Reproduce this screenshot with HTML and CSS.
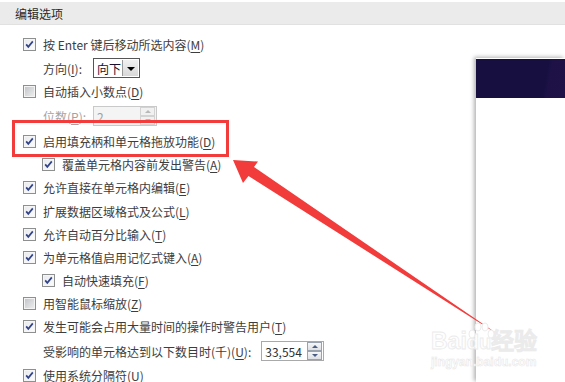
FILE: index.html
```html
<!DOCTYPE html>
<html lang="zh-CN">
<head>
<meta charset="utf-8">
<title>编辑选项</title>
<link rel="stylesheet" href="styles.css">
</head>
<body>
<svg class="defs" width="0" height="0" aria-hidden="true">
  <defs>
    <linearGradient id="gOn" x1="0" y1="0" x2="1" y2="1">
      <stop offset="0" stop-color="#e9ebee"/>
      <stop offset="1" stop-color="#fbfbfb"/>
    </linearGradient>
    <linearGradient id="gOff" x1="0" y1="0" x2="1" y2="1">
      <stop offset="0" stop-color="#c3c6cb"/>
      <stop offset="1" stop-color="#ececec"/>
    </linearGradient>
    <symbol id="cb-on" viewBox="0 0 13 13">
      <rect x="0.5" y="0.5" width="12" height="12" fill="#f6f6f6" stroke="#8e8f8f"/>
      <rect x="2" y="2" width="9" height="9" fill="url(#gOn)"/>
      <path d="M3.2 6.4 L5.3 8.9 L9.8 3.4" fill="none" stroke="#31438a" stroke-width="1.7"/>
    </symbol>
    <symbol id="cb-off" viewBox="0 0 13 13">
      <rect x="0.5" y="0.5" width="12" height="12" fill="#f4f4f4" stroke="#8e8f8f"/>
      <rect x="2" y="2" width="9" height="9" fill="url(#gOff)"/>
    </symbol>
  </defs>
</svg>

<div class="page">
  <div class="section-head">编辑选项</div>
  <div class="main">
    <div class="options">
      <div class="row"><svg class="cb"><use href="#cb-on"/></svg><span>按 Enter 键后移动所选内容(<u>M</u>)</span></div>
      <div class="row tall field">
        <span class="fixed">方向(<u>I</u>):</span>
        <div class="select"><span class="select-val">向下</span><span class="select-btn"><i class="tri-down"></i></span></div>
      </div>
      <div class="row"><svg class="cb"><use href="#cb-off"/></svg><span>自动插入小数点(<u>D</u>)</span></div>
      <div class="row ctl field">
        <span class="fixed disabled">位数(<u>P</u>):</span>
        <div class="spin spin-off"><span class="spin-val">2</span><span class="spin-btns"><span class="sb"><i class="tri-up"></i></span><span class="sb"><i class="tri-dn"></i></span></span></div>
      </div>
      <div class="row tall"><svg class="cb"><use href="#cb-on"/></svg><span>启用填充柄和单元格拖放功能(<u>D</u>)</span></div>
      <div class="row sub"><svg class="cb"><use href="#cb-on"/></svg><span>覆盖单元格内容前发出警告(<u>A</u>)</span></div>
      <div class="row"><svg class="cb"><use href="#cb-on"/></svg><span>允许直接在单元格内编辑(<u>E</u>)</span></div>
      <div class="row tall"><svg class="cb"><use href="#cb-on"/></svg><span>扩展数据区域格式及公式(<u>L</u>)</span></div>
      <div class="row"><svg class="cb"><use href="#cb-on"/></svg><span>允许自动百分比输入(<u>T</u>)</span></div>
      <div class="row"><svg class="cb"><use href="#cb-on"/></svg><span>为单元格值启用记忆式键入(<u>A</u>)</span></div>
      <div class="row sub"><svg class="cb"><use href="#cb-on"/></svg><span>自动快速填充(<u>F</u>)</span></div>
      <div class="row"><svg class="cb"><use href="#cb-off"/></svg><span>用智能鼠标缩放(<u>Z</u>)</span></div>
      <div class="row"><svg class="cb"><use href="#cb-on"/></svg><span>发生可能会占用大量时间的操作时警告用户(<u>T</u>)</span></div>
      <div class="row ctl field">
        <span class="field-lbl">受影响的单元格达到以下数目时(千)(<u>U</u>):</span>
        <div class="spin spin-on"><span class="spin-val">33,554</span><span class="spin-btns"><span class="sb"><i class="tri-up"></i></span><span class="sb"><i class="tri-dn"></i></span></span></div>
      </div>
      <div class="row last"><svg class="cb"><use href="#cb-on"/></svg><span>使用系统分隔符(<u>U</u>)</span></div>
    </div>
    <div class="panel"><div class="panel-head"></div></div>
  </div>

  <svg class="annot" viewBox="0 0 565 382" width="565" height="382" aria-hidden="true">
    <rect x="13.5" y="121.5" width="214" height="34" fill="none" stroke="#f23b3b" stroke-width="3"/>
    <polygon points="233,160 258,161.5 254,167 502,337 248.5,176 243,183" fill="#f23b3b"/>
  </svg>

  <div class="wm">
    <svg class="wm-paw" viewBox="0 0 30 20" width="30" height="20" aria-hidden="true">
      <ellipse cx="6" cy="12" rx="3" ry="4" fill="#fff" stroke="#ececec"/>
      <ellipse cx="12" cy="5" rx="3" ry="4" fill="#fff" stroke="#ececec"/>
      <ellipse cx="19" cy="5" rx="3" ry="4" fill="#fff" stroke="#ececec"/>
      <ellipse cx="25" cy="12" rx="3" ry="4" fill="#fff" stroke="#ececec"/>
    </svg>
    <div class="wm-logo">Bai<span class="wm-du">du</span>经验</div>
    <div class="wm-url">jingyan.baidu.com</div>
  </div>
</div>
</body>
</html>
```

FILE: styles.css
```css
html, body {
  margin: 0;
  padding: 0;
  background: #fff;
}

.defs {
  position: absolute;
  width: 0;
  height: 0;
  overflow: hidden;
}

.page {
  position: relative;
  width: 565px;
  height: 382px;
  overflow: hidden;
  display: flex;
  flex-direction: column;
  font-family: "Noto Sans CJK SC", "Microsoft YaHei", "Liberation Sans", sans-serif;
  font-size: 12px;
  color: #3d3d3d;
  background: #fff;
}

.section-head {
  flex: none;
  margin-top: 2px;
  height: 23px;
  box-sizing: border-box;
  padding-left: 15px;
  display: flex;
  align-items: center;
  background: #ebebeb;
  border-bottom: 1px solid #e1e1e1;
  color: #2a2a2a;
}

.main {
  flex: 1;
  display: flex;
  min-height: 0;
}

.options {
  flex: 1;
  padding: 8px 0 0 23px;
}

.row {
  height: 23px;
  display: flex;
  align-items: center;
  white-space: nowrap;
  line-height: 13px;
}

.row.tall { height: 24px; }
.row.ctl { height: 26px; }
.row.sub { padding-left: 19px; }
.row.field { padding-left: 20px; }
.row.last { height: 22px; }

.row u {
  text-decoration: underline;
  text-underline-offset: 2px;
  text-decoration-thickness: 1px;
}

.cb {
  flex: none;
  width: 13px;
  height: 13px;
  margin-right: 7px;
}

.fixed {
  width: 50px;
  flex: none;
}

.disabled {
  color: #a3a3a3;
}

.field-lbl {
  margin-right: 10px;
}

/* dropdown */
.select {
  width: 47px;
  height: 20px;
  box-sizing: border-box;
  border: 1px solid #555;
  background: #fff;
  display: flex;
  align-items: center;
  justify-content: space-between;
  color: #1a0f2e;
}

.select-val {
  padding-left: 3px;
}

.select-btn {
  width: 16px;
  height: 16px;
  margin-right: 1px;
  box-sizing: border-box;
  border-left: 1px solid #9a9a9a;
  background: linear-gradient(#f0f0f0, #d8d8d8);
  display: flex;
  align-items: center;
  justify-content: center;
}

.tri-down {
  width: 0;
  height: 0;
  border-left: 4px solid transparent;
  border-right: 4px solid transparent;
  border-top: 4px solid #000;
  margin-top: 1px;
}

/* spin boxes */
.spin {
  height: 20px;
  box-sizing: border-box;
  display: flex;
  align-items: center;
  justify-content: space-between;
}

.spin-off {
  width: 64px;
  border: 1px solid #c9c9c9;
  background: #f4f4f4;
  color: #a0a0a0;
}

.spin-on {
  width: 63px;
  border: 1px solid #a9a9a9;
  background: #fff;
  color: #2e2e2e;
}

.spin-val {
  padding-left: 3px;
}

.spin-btns {
  display: flex;
  flex-direction: column;
  margin-right: 1px;
}

.sb {
  width: 15px;
  height: 9px;
  box-sizing: border-box;
  display: flex;
  align-items: center;
  justify-content: center;
}

.spin-on .sb {
  border: 1px solid #9aa2ae;
  background: linear-gradient(#f6f6f6, #dde0e4);
}

.spin-off .sb {
  border: 1px solid #d3d3d3;
  background: #f1f1f1;
}

.tri-up, .tri-dn {
  width: 0;
  height: 0;
  border-left: 3px solid transparent;
  border-right: 3px solid transparent;
}

.spin-on .tri-up { border-bottom: 3px solid #4a5d85; }
.spin-on .tri-dn { border-top: 3px solid #4a5d85; }
.spin-off .tri-up { border-bottom: 3px solid #b8b8b8; }
.spin-off .tri-dn { border-top: 3px solid #b8b8b8; }

/* right panel */
.panel {
  flex: none;
  width: 89px;
  margin-top: 33px;
  background: #fff;
  box-shadow: -2px -1px 4px rgba(0, 0, 0, 0.3);
}

.panel-head {
  margin-top: 1px;
  height: 39px;
  background: linear-gradient(100deg, #160f40 0, #160f40 76%, #1d1146 80%, #1f1247 100%);
}

/* annotations */
.annot {
  position: absolute;
  left: 0;
  top: 0;
  pointer-events: none;
}

/* watermark */
.wm {
  position: absolute;
  left: 431px;
  top: 322px;
  width: 110px;
  font-family: "Liberation Sans", Arial, sans-serif;
  font-weight: bold;
  color: #fefefe;
  -webkit-text-stroke: 0.8px #ebebeb;
  pointer-events: none;
}

.wm-paw {
  position: absolute;
  left: 35px;
  top: 0;
}

.wm-logo {
  margin-top: 6px;
  font-size: 23px;
  line-height: 26px;
}

.wm-du {
  font-size: 20px;
}

.wm-url {
  font-size: 12px;
  line-height: 14px;
  -webkit-text-stroke: 0.5px #e6e6e6;
}
```
